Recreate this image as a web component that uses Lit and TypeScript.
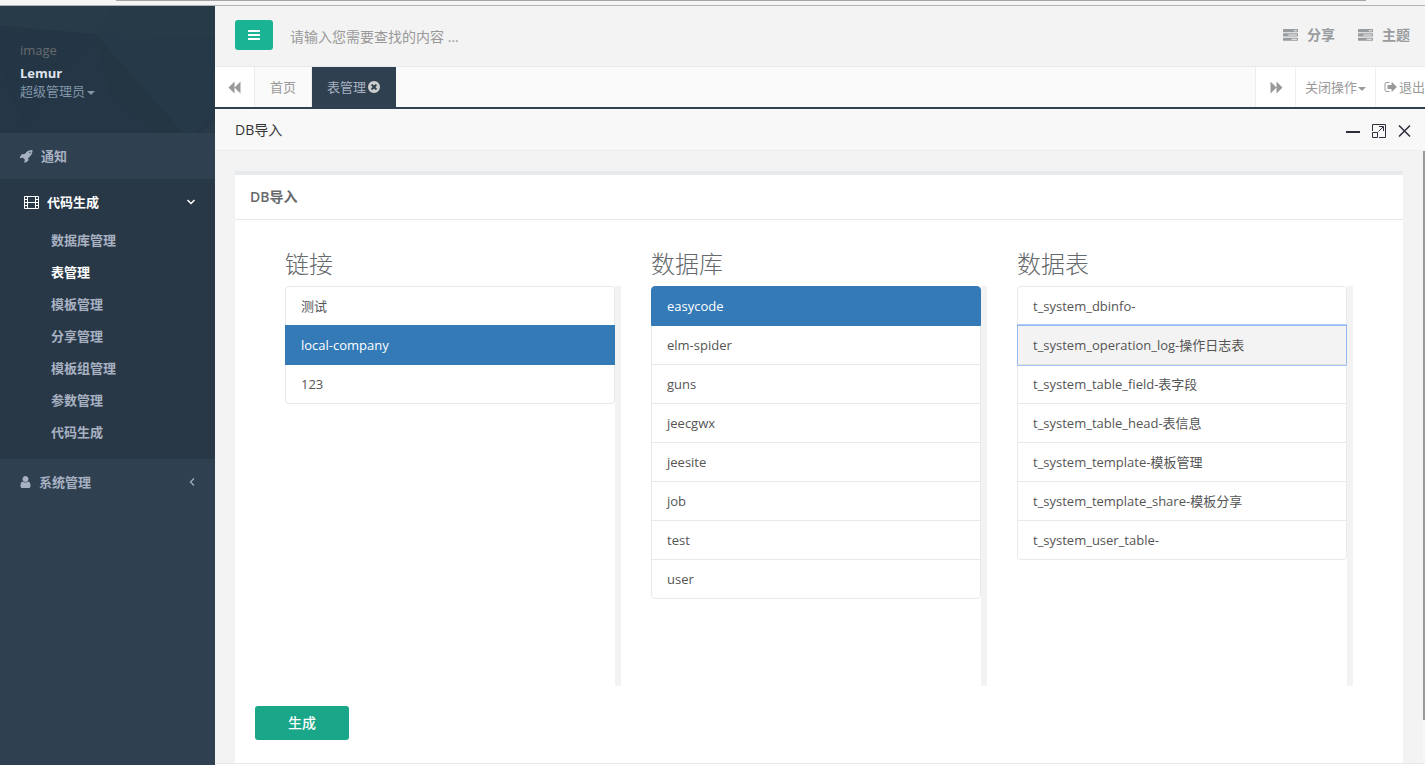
import { LitElement, html, css, svg, nothing } from "lit";
import { customElement, property, state } from "lit/decorators.js";
import { classMap } from "lit/directives/class-map.js";

const GLYPHS: Record<string, string> = {
  bars: "M1664 1344v128q0 26-19 45t-45 19h-1408q-26 0-45-19t-19-45v-128q0-26 19-45t45-19h1408q26 0 45 19t19 45zm0-512v128q0 26-19 45t-45 19h-1408q-26 0-45-19t-19-45v-128q0-26 19-45t45-19h1408q26 0 45 19t19 45zm0-512v128q0 26-19 45t-45 19h-1408q-26 0-45-19t-19-45v-128q0-26 19-45t45-19h1408q26 0 45 19t19 45z",
  remove:
    "M1277 1122q0-26-19-45l-181-181 181-181q19-19 19-45 0-27-19-46l-90-90q-19-19-46-19-26 0-45 19l-181 181-181-181q-19-19-45-19-27 0-46 19l-90 90q-19 19-19 46 0 26 19 45l181 181-181 181q-19 19-19 45 0 27 19 46l90 90q19 19 46 19 26 0 45-19l181-181 181 181q19 19 45 19 27 0 46-19l90-90q19-19 19-46zm387-226q0 209-103 385.5t-279.5 279.5-385.5 103-385.5-103-279.5-279.5-103-385.5 103-385.5 279.5-279.5 385.5-103 385.5 103 279.5 279.5 103 385.5z",
  user: "M1536 1399q0 109-62.5 187t-150.5 78h-854q-88 0-150.5-78t-62.5-187q0-85 8.5-160.5t31.5-152 58.5-131 94-89 134.5-34.5q131 128 313 128t313-128q76 0 134.5 34.5t94 89 58.5 131 31.5 152 8.5 160.5zm-256-887q0 159-112.5 271.5t-271.5 112.5-271.5-112.5-112.5-271.5 112.5-271.5 271.5-112.5 271.5 112.5 112.5 271.5z",
  rocket:
    "M1440 448q0-40-28-68t-68-28-68 28-28 68 28 68 68 28 68-28 28-68zm224-288q0 249-75.5 430.5t-253.5 360.5q-81 80-195 176l-20 379q-2 16-16 26l-384 224q-7 4-16 4-12 0-23-9l-64-64q-13-14-8-32l85-276-281-281-276 85q-3 1-9 1-14 0-23-9l-64-64q-17-19-5-39l224-384q10-14 26-16l379-20q96-114 176-195 188-187 358-258t431-71q14 0 24 9.5t10 22.5z",
  tasks:
    "M1024 1408h640v-128h-640v128zm-384-512h1024v-128h-1024v128zm640-512h384v-128h-384v128zm512 832v256q0 26-19 45t-45 19h-1664q-26 0-45-19t-19-45v-256q0-26 19-45t45-19h1664q26 0 45 19t19 45zm0-512v256q0 26-19 45t-45 19h-1664q-26 0-45-19t-19-45v-256q0-26 19-45t45-19h1664q26 0 45 19t19 45zm0-512v256q0 26-19 45t-45 19h-1664q-26 0-45-19t-19-45v-256q0-26 19-45t45-19h1664q26 0 45 19t19 45z",
  signout:
    "M704 1440q0 4 1 20t.5 26.5-3 23.5-10 19.5-20.5 6.5h-320q-119 0-203.5-84.5t-84.5-203.5v-704q0-119 84.5-203.5t203.5-84.5h320q13 0 22.5 9.5t9.5 22.5q0 4 1 20t.5 26.5-3 23.5-10 19.5-20.5 6.5h-320q-66 0-113 47t-47 113v704q0 66 47 113t113 47h312l11.5 1 11.5 3 8 5.5 7 9 2 13.5zm928-544q0 26-19 45l-544 544q-19 19-45 19t-45-19-19-45v-288h-448q-26 0-45-19t-19-45v-384q0-26 19-45t45-19h448v-288q0-26 19-45t45-19 45 19l544 544q19 19 19 45z",
  backward: "M832 192v1536L64 960zM1600 192v1536L832 960z",
  forward: "M192 192v1536L960 960zM960 192v1536L1728 960z",
};

/* Glyphs share a 1792-unit em; narrow ones pass their own horizontal window. */
const glyph = (name: string, width = 14, height = width, viewBox = "0 0 1792 1792") =>
  html`<svg class="icon" width=${width} height=${height} viewBox=${viewBox} aria-hidden="true">
    ${svg`<path fill="currentColor" d=${GLYPHS[name]} />`}
  </svg>`;

const film = html`<svg class="icon" width="15" height="13" viewBox="0 0 15 13" aria-hidden="true">
  <path
    fill="currentColor"
    fill-rule="evenodd"
    d="M1 0h13q1 0 1 1v11q0 1-1 1H1q-1 0-1-1V1Q0 0 1 0zM1 1v2h2V1zm0 3v2h2V4zm0 3v2h2V7zm0 3v2h2v-2zM4 1v5h7V1zm0 6v5h7V7zM12 1v2h2V1zm0 3v2h2V4zm0 3v2h2V7zm0 3v2h2v-2z"
  />
</svg>`;

const base = css`
  * {
    box-sizing: border-box;
  }
  button,
  input {
    font: inherit;
    color: inherit;
    border: 0;
    margin: 0;
    padding: 0;
    background: none;
    cursor: pointer;
  }
  a {
    color: inherit;
    text-decoration: none;
  }
  ul {
    list-style: none;
    margin: 0;
    padding: 0;
  }
  .icon {
    display: block;
    flex: none;
  }
  .caret {
    width: 0;
    height: 0;
    margin-top: 4px;
    border: 4px solid transparent;
    border-top-color: currentColor;
    border-bottom: 0;
  }
`;

@customElement("side-nav")
export class SideNav extends LitElement {
  @state() current = "表管理";

  private items = ["数据库管理", "表管理", "模板管理", "分享管理", "模板组管理", "参数管理", "代码生成"];

  static styles = [
    base,
    css`
      :host {
        display: block;
        width: 215px;
        flex: none;
        background: #2f4050;
        color: #a7b1c2;
        font-weight: 600;
      }
      .profile {
        position: relative;
        height: 127px;
        padding: 35px 20px 0;
        background: #253746;
        font-weight: 400;
        line-height: 18px;
      }
      .facets {
        position: absolute;
        inset: 0;
        width: 100%;
        height: 100%;
      }
      .info {
        position: relative;
      }
      .avatar {
        color: #676a6c;
        margin-bottom: 5px;
      }
      .name {
        color: #dfe4ed;
        font-weight: 700;
      }
      .role {
        display: flex;
        align-items: center;
        gap: 2px;
        color: #8095a8;
        line-height: 18px;
      }
      .link {
        display: flex;
        align-items: center;
        height: 46px;
        padding: 0 20px;
        gap: 8px;
      }
      .link.open {
        padding: 0 19px 0 24px;
        color: #fff;
      }
      .arrow {
        margin-left: auto;
      }
      .group {
        background: #293846;
        padding-bottom: 10px;
      }
      .sub {
        display: flex;
        align-items: center;
        height: 32px;
        padding: 0 0 2px 51px;
      }
      .sub.current {
        color: #fff;
      }
    `,
  ];

  render() {
    return html`
      <div class="profile">
        <svg class="facets" viewBox="0 0 215 127" preserveAspectRatio="none" aria-hidden="true">
          <path fill="#283b49" d="M0 0H113L95 28 0 20z" />
          <path fill="#273a48" d="M113 0H215V32L95 28z" />
          <path fill="#263948" d="M95 28L215 32V104L195 127H183z" />
          <path fill="#243645" d="M0 20L95 28 24 120 0 60z" />
          <path fill="#243544" d="M95 28L183 127H158L110 88z" />
          <path fill="#293b49" d="M215 114V127H202z" />
        </svg>
        <div class="info">
          <div class="avatar">image</div>
          <div class="name">Lemur</div>
          <button class="role">超级管理员<span class="caret"></span></button>
        </div>
      </div>
      <nav>
        <a class="link" href="#notice">${glyph("rocket", 13, 14, "64 0 1664 1792")}通知</a>
        <div class="group">
          <a class="link open" href="#code">
            ${film}代码生成
            <svg class="icon arrow" width="10" height="8" viewBox="0 0 10 8" aria-hidden="true">
              <path d="M1.500 2L5 5.500 8.500 2" fill="none" stroke="currentColor" stroke-width="1.500" />
            </svg>
          </a>
          <ul>
            ${this.items.map(
              (item) => html`<li>
                <a
                  class=${classMap({ sub: true, current: item === this.current })}
                  href="#"
                  @click=${() => (this.current = item)}
                  >${item}</a
                >
              </li>`,
            )}
          </ul>
        </div>
        <a class="link" href="#system">
          ${glyph("user", 11, 14, "192 0 1408 1792")}系统管理
          <svg class="icon arrow" width="6" height="10" viewBox="0 0 6 10" aria-hidden="true">
            <path d="M5 1.500L1.500 5 5 8.500" fill="none" stroke="currentColor" stroke-width="1.200" />
          </svg>
        </a>
      </nav>
    `;
  }
}

@customElement("top-bar")
export class TopBar extends LitElement {
  static styles = [
    base,
    css`
      :host {
        display: block;
        flex: none;
        color: #999c9e;
      }
      .header {
        display: flex;
        align-items: center;
        height: 61px;
        padding: 0 15px 2px 20px;
        border-bottom: 1px solid #e7eaec;
        font-size: 14px;
      }
      .toggle {
        display: grid;
        place-items: center;
        width: 38px;
        height: 30px;
        border-radius: 3px;
        background: #1ab394;
        color: #fff;
      }
      .search {
        flex: 1;
        min-width: 0;
        height: 30px;
        padding: 2px 17px 0;
        cursor: text;
        outline: 0;
      }
      .search::placeholder {
        color: #999;
        opacity: 1;
      }
      .action {
        display: flex;
        align-items: center;
        gap: 9px;
        margin-left: 23px;
        font-weight: 600;
      }
      .tabs {
        display: flex;
        height: 42px;
        background: #fafafa;
        border-bottom: 2px solid #2f4050;
        white-space: nowrap;
        overflow: hidden;
        color: #999;
      }
      .cell {
        display: flex;
        flex: none;
        align-items: center;
        justify-content: center;
        gap: 1px;
        height: 40px;
        background: #fff;
      }
      .roll {
        width: 40px;
      }
      .prev {
        border-right: 1px solid #eee;
      }
      .right {
        border-left: 1px solid #eee;
      }
      .tab {
        padding: 0 15px;
        background: #fafafa;
        border-right: 1px solid #eee;
      }
      .tab.active {
        background: #2f4050;
        border-right: 0;
        color: #a7b1c2;
      }
      .badge {
        color: #ccc;
      }
      .spacer {
        flex: 1;
      }
      .close {
        width: 80px;
      }
      .exit {
        width: 50px;
        justify-content: flex-start;
        padding-left: 8px;
      }
    `,
  ];

  render() {
    return html`
      <div class="header">
        <button class="toggle" aria-label="菜单">${glyph("bars")}</button>
        <input class="search" type="text" aria-label="查找" placeholder="请输入您需要查找的内容 …" />
        <a class="action" href="#share">${glyph("tasks", 15)}分享</a>
        <a class="action" href="#theme">${glyph("tasks", 15)}主题</a>
      </div>
      <div class="tabs">
        <button class="cell roll prev" aria-label="向左">${glyph("backward")}</button>
        <a class="cell tab" href="#home">首页</a>
        <a class="cell tab active" href="#tables">表管理<span class="badge">${glyph("remove")}</span></a>
        <span class="spacer"></span>
        <button class="cell roll right" aria-label="向右">${glyph("forward")}</button>
        <button class="cell right close">关闭操作<span class="caret"></span></button>
        <a class="cell right exit" href="#logout">${glyph("signout")}退出</a>
      </div>
    `;
  }
}

@customElement("pick-list")
export class PickList extends LitElement {
  @property() heading = "";
  @property({ type: Array }) options: string[] = [];
  @property() selected = "";
  @property() focused = "";

  static styles = [
    base,
    css`
      :host {
        display: block;
        min-width: 0;
      }
      h2 {
        margin: 0 0 8px;
        font-size: 24px;
        line-height: 28px;
        font-weight: 300;
        color: #676a6c;
      }
      .scroller {
        height: 400px;
        border-right: 6px solid #f3f3f3;
      }
      .option {
        position: relative;
        display: block;
        width: 100%;
        height: 40px;
        margin-bottom: -1px;
        padding: 0 15px;
        border: 1px solid #e7eaec;
        background: #fff;
        color: #555;
        text-align: left;
      }
      li:first-child .option {
        border-radius: 4px 4px 0 0;
      }
      li:last-child .option {
        border-radius: 0 0 4px 4px;
      }
      .option.selected {
        z-index: 1;
        background: #337ab7;
        border-color: #337ab7;
        color: #fff;
        font-weight: 500;
      }
      .option.focused {
        z-index: 1;
        background: #f3f3f3;
        border-color: #94b8ef;
        border-bottom-color: #dfe3e6;
        box-shadow: 0 -1px #b0ccf8, 0 1px #a6c3f7;
      }
    `,
  ];

  render() {
    return html`
      <h2>${this.heading}</h2>
      <div class="scroller">
        <ul>
          ${this.options.map(
            (name) => html`<li>
              <button
                class=${classMap({
                  option: true,
                  selected: name === this.selected,
                  focused: name === this.focused,
                })}
                aria-current=${name === this.selected ? "true" : nothing}
                @click=${() => (this.selected = name)}
              >
                ${name}
              </button>
            </li>`,
          )}
        </ul>
      </div>
    `;
  }
}

@customElement("app-root")
export class AppRoot extends LitElement {
  static styles = [
    base,
    css`
      :host {
        display: flex;
        flex-direction: column;
        height: 100vh;
        overflow: hidden;
        background: #f3f3f4;
        font-family: "Open Sans", "Noto Sans CJK SC", sans-serif;
        font-size: 13px;
        line-height: 18px;
        color: #676a6c;
      }
      .chrome {
        flex: none;
        height: 6px;
        padding: 0 59px 0 116px;
        background: #f5f5f5;
        border-bottom: 1px solid #b4b2b4;
      }
      .chrome-edge {
        height: 1px;
        background: #a5a3a5;
      }
      .shell {
        display: flex;
        flex: 1;
        min-height: 0;
      }
      .main {
        display: flex;
        flex-direction: column;
        flex: 1;
        min-width: 0;
      }
      .title {
        display: flex;
        flex: none;
        align-items: center;
        gap: 12px;
        height: 42px;
        padding: 0 14px 0 20px;
        background: #f8f8f8;
        border-bottom: 1px solid #eee;
        font-size: 14px;
        color: #333;
      }
      .title-text {
        flex: 1;
      }
      .tools {
        display: flex;
        align-items: center;
        gap: 12px;
        padding-top: 2px;
      }
      .tool {
        display: block;
        color: #2e2d3c;
      }
      .view {
        display: flex;
        flex: 1;
        min-height: 0;
        border-bottom: 1px solid #e7eaec;
      }
      .page {
        display: flex;
        flex: 1;
        min-width: 0;
        padding: 20px 20px 0;
      }
      .card {
        flex: 1;
        min-width: 0;
        background: #fff;
        border-top: 4px solid #e7eaec;
      }
      .card-head {
        margin: 0;
        height: 45px;
        padding: 0 15px;
        border-bottom: 1px solid #e7eaec;
        font-size: 14px;
        line-height: 44px;
        font-weight: 600;
      }
      .form {
        padding: 30px 20px 20px;
      }
      .lists {
        display: grid;
        grid-template-columns: repeat(3, minmax(0, 1fr));
        gap: 30px;
        margin: 0 30px 20px;
      }
      .submit {
        width: 94px;
        height: 34px;
        border-radius: 3px;
        background: #1aa688;
        color: #fff;
        font-size: 14px;
        font-weight: 500;
      }
      .track {
        flex: none;
        width: 2px;
        background: #f8f8f8;
      }
      .thumb {
        height: 93%;
        background: #999;
      }
      .floor {
        flex: none;
        height: 1px;
        background: #fff;
      }
    `,
  ];

  private connections = ["测试", "local-company", "123"];
  private databases = ["easycode", "elm-spider", "guns", "jeecgwx", "jeesite", "job", "test", "user"];
  private tables = [
    "t_system_dbinfo-",
    "t_system_operation_log-操作日志表",
    "t_system_table_field-表字段",
    "t_system_table_head-表信息",
    "t_system_template-模板管理",
    "t_system_template_share-模板分享",
    "t_system_user_table-",
  ];

  render() {
    return html`
      <div class="chrome"><div class="chrome-edge"></div></div>
      <div class="shell">
        <side-nav></side-nav>
        <div class="main">
          <top-bar></top-bar>
          <div class="title">
            <span class="title-text">DB导入</span>
            <div class="tools">
              <button class="tool" aria-label="最小化">
                <svg class="icon" width="14" height="14" viewBox="0 0 14 14">
                  <path d="M0 8h14" stroke="currentColor" stroke-width="2" />
                </svg>
              </button>
              <button class="tool" aria-label="最大化">
                <svg class="icon" width="14" height="14" viewBox="0 0 14 14">
                  <path
                    d="M.5 7V.5h13v13H7M.5 8.500h5v5h-5zM6.500 7.500L11 3M7 2.500h4.500V7"
                    fill="none"
                    stroke="currentColor"
                  />
                </svg>
              </button>
              <button class="tool" aria-label="关闭">
                <svg class="icon" width="13" height="12" viewBox="0 0 13 12">
                  <path d="M1 .5l11 11M12 .5l-11 11" stroke="currentColor" stroke-width="1.500" />
                </svg>
              </button>
            </div>
          </div>
          <div class="view">
            <div class="page">
              <section class="card">
                <h1 class="card-head">DB导入</h1>
                <div class="form">
                  <div class="lists">
                    <pick-list heading="链接" .options=${this.connections} selected="local-company"></pick-list>
                    <pick-list heading="数据库" .options=${this.databases} selected="easycode"></pick-list>
                    <pick-list heading="数据表" .options=${this.tables} focused=${this.tables[1]}></pick-list>
                  </div>
                  <button class="submit">生成</button>
                </div>
              </section>
            </div>
            <div class="track"><div class="thumb"></div></div>
          </div>
          <div class="floor"></div>
        </div>
      </div>
    `;
  }
}
